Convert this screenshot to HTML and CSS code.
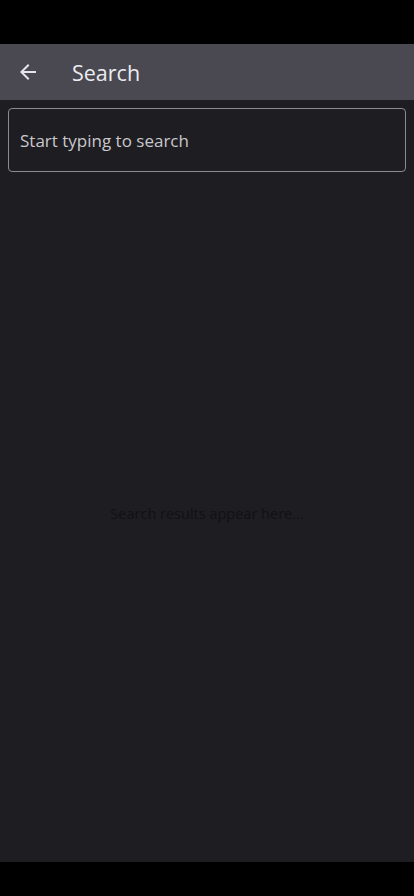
FILE: index.html
```html
<!DOCTYPE html>
<html>
<head>
<meta charset="utf-8">
<link rel="stylesheet" href="styles.css">
</head>
<body>
<div class="app">
  <div class="status"></div>
  <header class="toolbar">
    <button class="back" aria-label="Back">
      <svg width="24" height="24" viewBox="0 0 24 24"><path d="M20 11H7.83l5.59-5.59L12 4l-8 8 8 8 1.41-1.41L7.83 13H20v-2z" fill="#e6e6ea"/></svg>
    </button>
    <h1 class="title">Search</h1>
  </header>
  <main class="content">
    <div class="field">Start typing to search</div>
    <div class="empty">Search results appear here...</div>
  </main>
  <div class="navbar"></div>
</div>
</body>
</html>
```

FILE: styles.css
```css
* { box-sizing: border-box; }
html, body { margin: 0; padding: 0; height: 100%; }
body { background: #000; font-family: "Open Sans", "Noto Sans", sans-serif; }
.app { display: flex; flex-direction: column; height: 896px; }
.status { height: 44px; background: #000; flex: none; }
.toolbar { height: 56px; background: #4a4850; display: flex; align-items: center; flex: none; }
.back { background: none; border: 0; padding: 0; margin-left: 16px; width: 24px; height: 24px; display: flex; }
.title { margin: 0 0 0 32px; font-size: 21.5px; font-weight: 400; color: #ececf0; }
.content { flex: 1; background: #1e1d22; display: flex; flex-direction: column; padding: 8px; }
.field { height: 64px; border: 1px solid #8c8b90; border-radius: 4px; display: flex; align-items: center; padding-left: 11px; color: #c9c8cd; font-size: 17px; }
.empty { flex: 1; display: flex; align-items: center; justify-content: center; color: #121115; font-size: 14.5px; }
.navbar { height: 34px; background: #000; flex: none; }
```
